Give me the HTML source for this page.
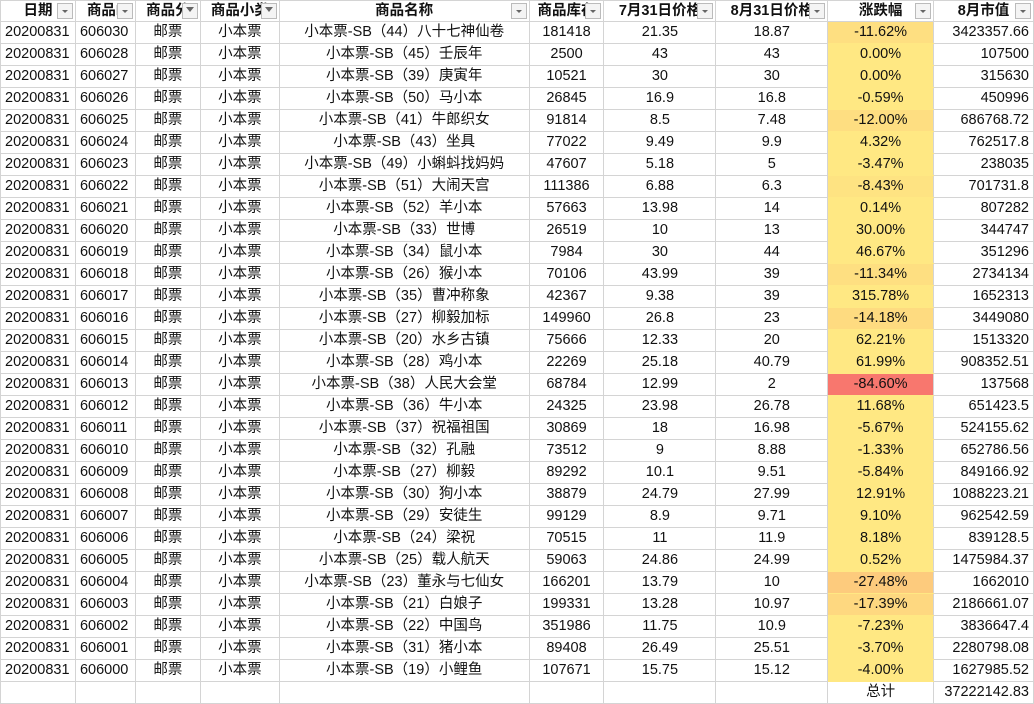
<!DOCTYPE html>
<html><head><meta charset="utf-8"><style>
body{margin:0;background:#fff;width:1034px;height:703px;overflow:hidden;font-family:"Liberation Sans","Noto Sans CJK SC",sans-serif;font-size:14.5px;color:#111}
table{border-collapse:collapse;table-layout:fixed;position:absolute;left:0;top:0}
tr{height:22px}
tr.h{height:21px}
td{border:1px solid #d4d4d4;padding:0 4px;white-space:nowrap;overflow:hidden;text-align:center;line-height:17px}
tr.h td{font-weight:bold;position:relative;text-align:center}
td.l{text-align:left}td.r{text-align:right}
td.y{background:#FFE883;border-top-color:#FFE883;border-bottom-color:#FFE883}
.dd{position:absolute;right:2px;top:2px;width:14px;height:14px;border:1px solid #bbb;background:#f4f4f4}
.dd:after{content:"";position:absolute;left:4px;top:6px;border-left:3px solid transparent;border-right:3px solid transparent;border-top:3px solid #666}
.f:after{left:3px;top:3px;border-left:4px solid transparent;border-right:4px solid transparent;border-top:5px solid #666}
</style></head><body>
<table>
<colgroup><col style="width:75px"><col style="width:60px"><col style="width:65px"><col style="width:79px"><col style="width:250px"><col style="width:75px"><col style="width:112px"><col style="width:112px"><col style="width:106px"><col style="width:100px"></colgroup>
<tr class="h"><td>日期 <span class="dd"></span></td><td class="l">商品II<span class="dd"></span></td><td class="l">商品分<span class="dd f"></span></td><td class="l">商品小类<span class="dd f"></span></td><td>商品名称<span class="dd"></span></td><td class="l">商品库存<span class="dd"></span></td><td>7月31日价格<span class="dd"></span></td><td class="l">8月31日价格<span class="dd"></span></td><td>涨跌幅<span class="dd"></span></td><td>8月市值<span class="dd"></span></td></tr>
<tr><td class="l">20200831</td><td class="l">606030</td><td>邮票</td><td>小本票</td><td>小本票-SB（44）八十七神仙卷</td><td>181418</td><td>21.35</td><td>18.87</td><td class="y" style="background:#FEDF81">-11.62%</td><td class="r">3423357.66</td></tr>
<tr><td class="l">20200831</td><td class="l">606028</td><td>邮票</td><td>小本票</td><td>小本票-SB（45）壬辰年</td><td>2500</td><td>43</td><td>43</td><td class="y">0.00%</td><td class="r">107500</td></tr>
<tr><td class="l">20200831</td><td class="l">606027</td><td>邮票</td><td>小本票</td><td>小本票-SB（39）庚寅年</td><td>10521</td><td>30</td><td>30</td><td class="y">0.00%</td><td class="r">315630</td></tr>
<tr><td class="l">20200831</td><td class="l">606026</td><td>邮票</td><td>小本票</td><td>小本票-SB（50）马小本</td><td>26845</td><td>16.9</td><td>16.8</td><td class="y">-0.59%</td><td class="r">450996</td></tr>
<tr><td class="l">20200831</td><td class="l">606025</td><td>邮票</td><td>小本票</td><td>小本票-SB（41）牛郎织女</td><td>91814</td><td>8.5</td><td>7.48</td><td class="y" style="background:#FEDE81">-12.00%</td><td class="r">686768.72</td></tr>
<tr><td class="l">20200831</td><td class="l">606024</td><td>邮票</td><td>小本票</td><td>小本票-SB（43）坐具</td><td>77022</td><td>9.49</td><td>9.9</td><td class="y">4.32%</td><td class="r">762517.8</td></tr>
<tr><td class="l">20200831</td><td class="l">606023</td><td>邮票</td><td>小本票</td><td>小本票-SB（49）小蝌蚪找妈妈</td><td>47607</td><td>5.18</td><td>5</td><td class="y">-3.47%</td><td class="r">238035</td></tr>
<tr><td class="l">20200831</td><td class="l">606022</td><td>邮票</td><td>小本票</td><td>小本票-SB（51）大闹天宫</td><td>111386</td><td>6.88</td><td>6.3</td><td class="y" style="background:#FEE382">-8.43%</td><td class="r">701731.8</td></tr>
<tr><td class="l">20200831</td><td class="l">606021</td><td>邮票</td><td>小本票</td><td>小本票-SB（52）羊小本</td><td>57663</td><td>13.98</td><td>14</td><td class="y">0.14%</td><td class="r">807282</td></tr>
<tr><td class="l">20200831</td><td class="l">606020</td><td>邮票</td><td>小本票</td><td>小本票-SB（33）世博</td><td>26519</td><td>10</td><td>13</td><td class="y">30.00%</td><td class="r">344747</td></tr>
<tr><td class="l">20200831</td><td class="l">606019</td><td>邮票</td><td>小本票</td><td>小本票-SB（34）鼠小本</td><td>7984</td><td>30</td><td>44</td><td class="y">46.67%</td><td class="r">351296</td></tr>
<tr><td class="l">20200831</td><td class="l">606018</td><td>邮票</td><td>小本票</td><td>小本票-SB（26）猴小本</td><td>70106</td><td>43.99</td><td>39</td><td class="y" style="background:#FEDF81">-11.34%</td><td class="r">2734134</td></tr>
<tr><td class="l">20200831</td><td class="l">606017</td><td>邮票</td><td>小本票</td><td>小本票-SB（35）曹冲称象</td><td>42367</td><td>9.38</td><td>39</td><td class="y">315.78%</td><td class="r">1652313</td></tr>
<tr><td class="l">20200831</td><td class="l">606016</td><td>邮票</td><td>小本票</td><td>小本票-SB（27）柳毅加标</td><td>149960</td><td>26.8</td><td>23</td><td class="y" style="background:#FEDB80">-14.18%</td><td class="r">3449080</td></tr>
<tr><td class="l">20200831</td><td class="l">606015</td><td>邮票</td><td>小本票</td><td>小本票-SB（20）水乡古镇</td><td>75666</td><td>12.33</td><td>20</td><td class="y">62.21%</td><td class="r">1513320</td></tr>
<tr><td class="l">20200831</td><td class="l">606014</td><td>邮票</td><td>小本票</td><td>小本票-SB（28）鸡小本</td><td>22269</td><td>25.18</td><td>40.79</td><td class="y">61.99%</td><td class="r">908352.51</td></tr>
<tr><td class="l">20200831</td><td class="l">606013</td><td>邮票</td><td>小本票</td><td>小本票-SB（38）人民大会堂</td><td>68784</td><td>12.99</td><td>2</td><td class="y" style="background:#F8776E">-84.60%</td><td class="r">137568</td></tr>
<tr><td class="l">20200831</td><td class="l">606012</td><td>邮票</td><td>小本票</td><td>小本票-SB（36）牛小本</td><td>24325</td><td>23.98</td><td>26.78</td><td class="y">11.68%</td><td class="r">651423.5</td></tr>
<tr><td class="l">20200831</td><td class="l">606011</td><td>邮票</td><td>小本票</td><td>小本票-SB（37）祝福祖国</td><td>30869</td><td>18</td><td>16.98</td><td class="y">-5.67%</td><td class="r">524155.62</td></tr>
<tr><td class="l">20200831</td><td class="l">606010</td><td>邮票</td><td>小本票</td><td>小本票-SB（32）孔融</td><td>73512</td><td>9</td><td>8.88</td><td class="y">-1.33%</td><td class="r">652786.56</td></tr>
<tr><td class="l">20200831</td><td class="l">606009</td><td>邮票</td><td>小本票</td><td>小本票-SB（27）柳毅</td><td>89292</td><td>10.1</td><td>9.51</td><td class="y">-5.84%</td><td class="r">849166.92</td></tr>
<tr><td class="l">20200831</td><td class="l">606008</td><td>邮票</td><td>小本票</td><td>小本票-SB（30）狗小本</td><td>38879</td><td>24.79</td><td>27.99</td><td class="y">12.91%</td><td class="r">1088223.21</td></tr>
<tr><td class="l">20200831</td><td class="l">606007</td><td>邮票</td><td>小本票</td><td>小本票-SB（29）安徒生</td><td>99129</td><td>8.9</td><td>9.71</td><td class="y">9.10%</td><td class="r">962542.59</td></tr>
<tr><td class="l">20200831</td><td class="l">606006</td><td>邮票</td><td>小本票</td><td>小本票-SB（24）梁祝</td><td>70515</td><td>11</td><td>11.9</td><td class="y">8.18%</td><td class="r">839128.5</td></tr>
<tr><td class="l">20200831</td><td class="l">606005</td><td>邮票</td><td>小本票</td><td>小本票-SB（25）载人航天</td><td>59063</td><td>24.86</td><td>24.99</td><td class="y">0.52%</td><td class="r">1475984.37</td></tr>
<tr><td class="l">20200831</td><td class="l">606004</td><td>邮票</td><td>小本票</td><td>小本票-SB（23）董永与七仙女</td><td>166201</td><td>13.79</td><td>10</td><td class="y" style="background:#FDCB7D">-27.48%</td><td class="r">1662010</td></tr>
<tr><td class="l">20200831</td><td class="l">606003</td><td>邮票</td><td>小本票</td><td>小本票-SB（21）白娘子</td><td>199331</td><td>13.28</td><td>10.97</td><td class="y" style="background:#FED880">-17.39%</td><td class="r">2186661.07</td></tr>
<tr><td class="l">20200831</td><td class="l">606002</td><td>邮票</td><td>小本票</td><td>小本票-SB（22）中国鸟</td><td>351986</td><td>11.75</td><td>10.9</td><td class="y">-7.23%</td><td class="r">3836647.4</td></tr>
<tr><td class="l">20200831</td><td class="l">606001</td><td>邮票</td><td>小本票</td><td>小本票-SB（31）猪小本</td><td>89408</td><td>26.49</td><td>25.51</td><td class="y">-3.70%</td><td class="r">2280798.08</td></tr>
<tr><td class="l">20200831</td><td class="l">606000</td><td>邮票</td><td>小本票</td><td>小本票-SB（19）小鲤鱼</td><td>107671</td><td>15.75</td><td>15.12</td><td class="y">-4.00%</td><td class="r">1627985.52</td></tr>
<tr><td></td><td></td><td></td><td></td><td></td><td></td><td></td><td></td><td>总计</td><td class="r">37222142.83</td></tr>
</table>
</body></html>
